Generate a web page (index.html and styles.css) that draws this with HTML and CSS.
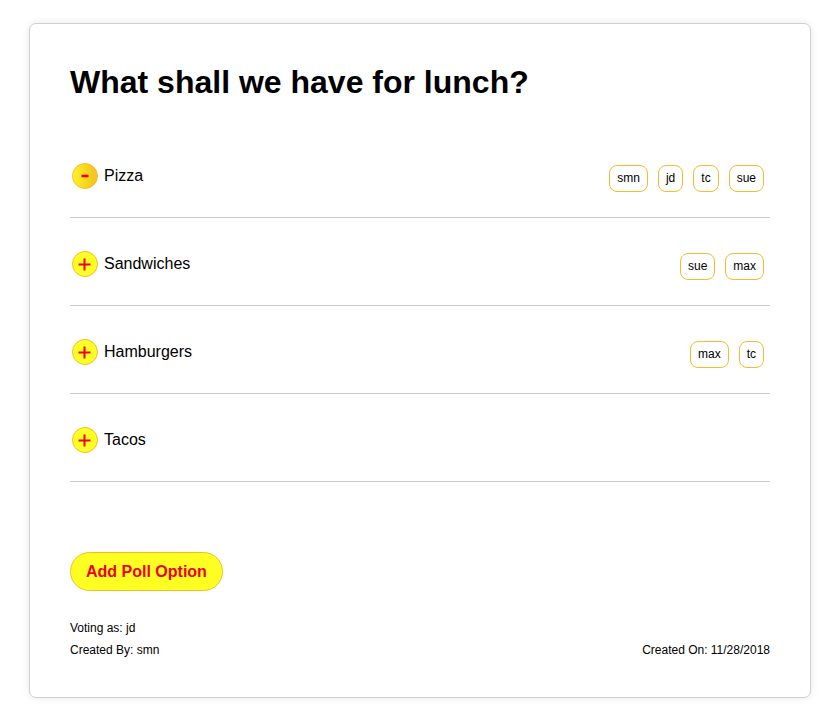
FILE: index.html
```html
<!DOCTYPE html>
<html>
<head>
<meta charset="utf-8">
<link rel="stylesheet" href="styles.css">
</head>
<body>
<div class="card">
  <h1 class="title">What shall we have for lunch?</h1>
  <ul class="options">
    <li class="option">
      <div class="label">
        <span class="vote vote-on"><svg width="26" height="26" viewBox="0 0 26 26"><line x1="9.5" y1="13" x2="16.5" y2="13" stroke="#ee0022" stroke-width="2.4"/></svg></span>
        <span class="name">Pizza</span>
      </div>
      <div class="voters">
        <span class="voter">smn</span><span class="voter">jd</span><span class="voter">tc</span><span class="voter">sue</span>
      </div>
    </li>
    <li class="option">
      <div class="label">
        <span class="vote"><svg width="26" height="26" viewBox="0 0 26 26"><path d="M6.5 13.5H18.5M12.5 7.5V19.5" stroke="#ee0022" stroke-width="2"/></svg></span>
        <span class="name">Sandwiches</span>
      </div>
      <div class="voters">
        <span class="voter">sue</span><span class="voter">max</span>
      </div>
    </li>
    <li class="option">
      <div class="label">
        <span class="vote"><svg width="26" height="26" viewBox="0 0 26 26"><path d="M6.5 13.5H18.5M12.5 7.5V19.5" stroke="#ee0022" stroke-width="2"/></svg></span>
        <span class="name">Hamburgers</span>
      </div>
      <div class="voters">
        <span class="voter">max</span><span class="voter">tc</span>
      </div>
    </li>
    <li class="option">
      <div class="label">
        <span class="vote"><svg width="26" height="26" viewBox="0 0 26 26"><path d="M6.5 13.5H18.5M12.5 7.5V19.5" stroke="#ee0022" stroke-width="2"/></svg></span>
        <span class="name">Tacos</span>
      </div>
      <div class="voters"></div>
    </li>
  </ul>
  <button class="add-btn">Add Poll Option</button>
  <div class="meta">
    <p class="meta-line">Voting as: jd</p>
    <div class="meta-row">
      <p class="meta-line">Created By: smn</p>
      <p class="meta-line">Created On: 11/28/2018</p>
    </div>
  </div>
</div>
</body>
</html>
```
FILE: styles.css
```css
html, body {
  margin: 0;
  background: #ffffff;
}
body {
  padding: 23px 29px;
  font-family: "Liberation Sans", Arial, sans-serif;
  color: #000;
}
.card {
  width: 782px;
  box-sizing: border-box;
  border: 1px solid #cfcfcf;
  border-radius: 7px;
  box-shadow: 0 0 8px rgba(0, 0, 0, 0.09);
  padding: 40px 40px 40px;
  background: #fff;
}
.title {
  margin: 0 0 29px;
  font-size: 32px;
  line-height: 37px;
  font-weight: bold;
}
.options {
  list-style: none;
  margin: 0;
  padding: 0;
}
.option {
  display: flex;
  justify-content: space-between;
  align-items: flex-start;
  height: 87px;
  box-sizing: content-box;
  padding: 0;
  border-bottom: 1px solid #cccccc;
}
.label {
  display: flex;
  align-items: center;
  margin-top: 33px;
  margin-left: 2px;
}
.vote {
  width: 26px;
  height: 26px;
  box-sizing: border-box;
  border: 1px solid #f2be2a;
  border-radius: 50%;
  background: #ffff26;
  display: flex;
  align-items: center;
  justify-content: center;
  overflow: hidden;
}
.vote svg {
  display: block;
  flex: none;
}
.vote-on {
  background: linear-gradient(to right, #fff526 0%, #f7d21f 60%, #f3c020 100%);
}
.name {
  margin-left: 6px;
  font-size: 16px;
  line-height: 18px;
}
.voters {
  display: flex;
  margin-top: 35px;
  margin-right: 6px;
}
.voter {
  margin-left: 10px;
  height: 27px;
  box-sizing: border-box;
  padding: 0 7px;
  border: 1px solid #f6bc2c;
  border-radius: 8px;
  font-size: 12px;
  line-height: 25px;
}
.add-btn {
  display: block;
  margin-top: 70px;
  height: 39px;
  padding: 0 15px;
  border: 1px solid #f4bc28;
  border-radius: 20px;
  background: #ffff22;
  color: #ee0022;
  font-family: "Liberation Sans", Arial, sans-serif;
  font-size: 16px;
  font-weight: bold;
}
.meta {
  margin-top: 30px;
}
.meta-line {
  margin: 0;
  font-size: 12px;
  line-height: 14px;
}
.meta > .meta-line {
  margin-bottom: 8px;
}
.meta-row {
  display: flex;
  justify-content: space-between;
}
```
